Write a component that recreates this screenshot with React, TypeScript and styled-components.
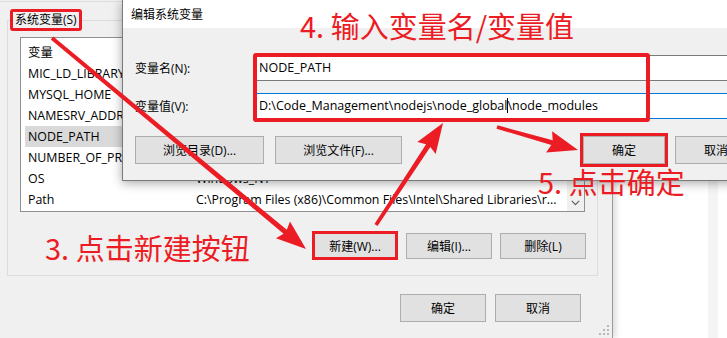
import React from 'react'
import styled, { createGlobalStyle } from 'styled-components'

const RED = '#ec1c24'
const UI_FONT = `"Open Sans", "Noto Sans CJK SC", sans-serif`
const NOTE_FONT = `"Noto Sans CJK SC", "Noto Sans", sans-serif`

const GlobalStyle = createGlobalStyle`
  html, body {
    margin: 0;
    padding: 0;
  }
  body {
    width: 727px;
    height: 338px;
    overflow: hidden;
    background: #ffffff;
    font-family: ${UI_FONT};
    font-size: 12px;
    color: #000000;
  }
`

const Desktop = styled.div`
  position: relative;
  width: 727px;
  height: 338px;
  overflow: hidden;
  display: flex;
`

/* ---------- back window: 环境变量 ---------- */

const BackDialog = styled.div`
  position: relative;
  width: 612px;
  flex: none;
  background: #f0f0f0;
  border-right: 1px solid #9a9a9a;
  box-shadow: 3px 0 6px rgba(0, 0, 0, 0.14);
  display: flex;
  flex-direction: column;
  z-index: 1;
`

const TopEdge = styled.div`
  height: 1px;
  margin-top: 1px;
  background: #dcdcdc;
`

const GroupBox = styled.fieldset`
  box-sizing: border-box;
  width: 591px;
  height: 267px;
  margin: 7px 0 0 7px;
  padding: 0;
  border: 1px solid #dcdcdc;
  display: flex;
  flex-direction: column;
  min-width: 0;
`

const GroupTitle = styled.legend`
  margin-left: 2px;
  padding: 0 2px;
  border: 3px solid ${RED};
  border-radius: 3px;
  line-height: 16px;
  font-size: 12px;
`

const ListBox = styled.div`
  box-sizing: border-box;
  width: 565px;
  height: 175px;
  margin: 6px 0 0 12px;
  border: 1px solid #8f8f8f;
  background: #ffffff;
  display: flex;
  overflow: hidden;
`

const ListRows = styled.div`
  flex: 1;
  padding-top: 3px;
  display: flex;
  flex-direction: column;
  min-width: 0;
`

const ListRow = styled.div<{ $selected?: boolean; $header?: boolean }>`
  display: grid;
  grid-template-columns: 168px 1fr;
  height: ${(p) => (p.$header ? 22 : 21)}px;
  align-items: center;
  margin-left: 4px;
  padding-left: 3px;
  background: ${(p) => (p.$selected ? '#d9d9d9' : 'transparent')};
  font-size: 12.4px;
  white-space: nowrap;
`

const Cell = styled.span`
  overflow: hidden;
  padding-right: 4px;
`

const ScrollBar = styled.div`
  width: 17px;
  flex: none;
  background: #f0f0f0;
  display: flex;
  flex-direction: column;
  justify-content: flex-end;
`

const ScrollArrow = styled.div`
  height: 17px;
  display: flex;
  align-items: center;
  justify-content: center;
`

const ButtonRow = styled.div<{ $top: number; $right: number; $gap: number }>`
  display: flex;
  justify-content: flex-end;
  align-items: center;
  gap: ${(p) => p.$gap}px;
  margin-top: ${(p) => p.$top}px;
  padding-right: ${(p) => p.$right}px;
`

const WinButton = styled.button<{ $w: number; $h: number; $mark?: number }>`
  box-sizing: border-box;
  width: ${(p) => p.$w}px;
  height: ${(p) => p.$h}px;
  flex: none;
  padding: 0;
  background: #e1e1e1;
  border: 1px solid #adadad;
  border-radius: 0;
  font-family: ${UI_FONT};
  font-size: 12px;
  color: #000000;
  outline: ${(p) => (p.$mark !== undefined ? `3px solid ${RED}` : 'none')};
  outline-offset: ${(p) => p.$mark ?? 0}px;
`

const Grip = styled.svg`
  position: absolute;
  right: 2px;
  bottom: 2px;
`

/* ---------- right side of the desktop ---------- */

const RightPane = styled.div`
  flex: 1;
  background: #ffffff;
  display: flex;
  justify-content: flex-end;
  padding-right: 9px;
`

const Stripe = styled.div`
  width: 10px;
  background: #f4f4f4;
`

/* ---------- front window: 编辑系统变量 ---------- */

const EditDialog = styled.div`
  position: absolute;
  left: 122px;
  top: 0;
  width: 650px;
  height: 181px;
  box-sizing: border-box;
  background: #f0f0f0;
  border: 1px solid #7a7a7a;
  border-top: none;
  box-shadow: 0 2px 10px rgba(0, 0, 0, 0.35);
  display: flex;
  flex-direction: column;
  z-index: 2;
`

const TitleBar = styled.div`
  height: 28px;
  flex: none;
  background: #ffffff;
  display: flex;
  align-items: center;
  padding-left: 8px;
`

const DialogBody = styled.div`
  padding: 27px 14px 0 12px;
  display: flex;
  flex-direction: column;
`

const FormGrid = styled.div`
  display: grid;
  grid-template-columns: 121px 1fr;
  row-gap: 12px;
  align-items: center;
`

const TextField = styled.div<{ $focused?: boolean }>`
  box-sizing: border-box;
  height: 26px;
  background: #ffffff;
  border: 1px solid ${(p) => (p.$focused ? '#0078d7' : '#7a7a7a')};
  padding-left: 2px;
  line-height: 24px;
  font-size: 12.5px;
  white-space: nowrap;
`

const Caret = styled.span`
  display: inline-block;
  width: 1px;
  height: 15px;
  background: #000000;
  vertical-align: -3px;
  margin-right: -1px;
`

const Spacer = styled.div`
  flex: 1;
`

/* ---------- red annotations ---------- */

const Note = styled.div<{ $x: number; $y: number }>`
  position: absolute;
  left: ${(p) => p.$x}px;
  top: ${(p) => p.$y}px;
  font-family: ${NOTE_FONT};
  font-size: 29px;
  line-height: 32px;
  color: ${RED};
  white-space: nowrap;
  z-index: 4;
`

const FieldMark = styled.div`
  position: absolute;
  left: 253px;
  top: 53px;
  width: 397px;
  height: 69px;
  box-sizing: border-box;
  border: 4px solid ${RED};
  border-radius: 3px;
  z-index: 3;
`

const ArrowLayer = styled.svg`
  position: absolute;
  left: 0;
  top: 0;
  z-index: 5;
  pointer-events: none;
`

const arrowPoints = (x1: number, y1: number, x2: number, y2: number) => {
  const len = Math.hypot(x2 - x1, y2 - y1)
  const ux = (x2 - x1) / len
  const uy = (y2 - y1) / len
  const nx = -uy
  const ny = ux
  const head = 27
  const wing = 11
  const shaft = 1.8
  const bx = x2 - ux * head
  const by = y2 - uy * head
  const wx = bx - ux * 3
  const wy = by - uy * 3
  const pts = [
    [x1 + nx * shaft, y1 + ny * shaft],
    [bx + nx * shaft * 1.4, by + ny * shaft * 1.4],
    [wx + nx * wing, wy + ny * wing],
    [x2, y2],
    [wx - nx * wing, wy - ny * wing],
    [bx - nx * shaft * 1.4, by - ny * shaft * 1.4],
    [x1 - nx * shaft, y1 - ny * shaft],
  ]
  return pts.map(([x, y]) => `${x.toFixed(1)},${y.toFixed(1)}`).join(' ')
}

const arrows = [
  [52, 38, 306, 249],
  [376, 225, 443, 123],
  [497, 127, 578, 150],
]

// values above the OS row lie under the edit window, so only the visible ones are filled
const rows = [
  ['MIC_LD_LIBRARY', ''],
  ['MYSQL_HOME', ''],
  ['NAMESRV_ADDR', ''],
  ['NODE_PATH', ''],
  ['NUMBER_OF_PR', ''],
  ['OS', 'Windows_NT'],
  ['Path', 'C:\\Program Files (x86)\\Common Files\\Intel\\Shared Libraries\\r...'],
]

const App = () => (
  <Desktop>
    <GlobalStyle />
    <BackDialog>
      <TopEdge />
      <GroupBox>
        <GroupTitle>系统变量(S)</GroupTitle>
        <ListBox>
          <ListRows>
            <ListRow $header>
              <Cell>变量</Cell>
              <Cell />
            </ListRow>
            {rows.map(([name, value]) => (
              <ListRow key={name} $selected={name === 'NODE_PATH'}>
                <Cell>{name}</Cell>
                <Cell>{value}</Cell>
              </ListRow>
            ))}
          </ListRows>
          <ScrollBar>
            <ScrollArrow>
              <svg width="9" height="6" viewBox="0 0 9 6">
                <path d="M0.8 0.8 L4.5 4.6 L8.2 0.8" fill="none" stroke="#606060" strokeWidth="1.2" />
              </svg>
            </ScrollArrow>
          </ScrollBar>
        </ListBox>
        <ButtonRow $top={19} $right={11} $gap={8}>
          <WinButton $w={86} $h={29} $mark={-3}>新建(W)...</WinButton>
          <WinButton $w={86} $h={26}>编辑(I)...</WinButton>
          <WinButton $w={86} $h={26}>删除(L)</WinButton>
        </ButtonRow>
      </GroupBox>
      <ButtonRow $top={18} $right={31} $gap={9}>
        <WinButton $w={86} $h={28}>确定</WinButton>
        <WinButton $w={86} $h={28}>取消</WinButton>
      </ButtonRow>
      <Grip width="11" height="11" viewBox="0 0 11 11">
        {[
          [8, 0],
          [4, 4],
          [8, 4],
          [0, 8],
          [4, 8],
          [8, 8],
        ].map(([x, y]) => (
          <rect key={`${x}-${y}`} x={x} y={y} width="2" height="2" fill="#b8b8b8" />
        ))}
      </Grip>
    </BackDialog>
    <RightPane>
      <Stripe />
    </RightPane>

    <EditDialog>
      <TitleBar>编辑系统变量</TitleBar>
      <DialogBody>
        <FormGrid>
          <span>变量名(N):</span>
          <TextField>NODE_PATH</TextField>
          <span>变量值(V):</span>
          <TextField $focused>
            D:\Code_Management\nodejs\node_global
            <Caret />
            \node_modules
          </TextField>
        </FormGrid>
        <ButtonRow $top={17} $right={0} $gap={11}>
          <WinButton $w={129} $h={28}>浏览目录(D)...</WinButton>
          <WinButton $w={127} $h={28}>浏览文件(F)...</WinButton>
          <Spacer />
          <WinButton $w={82} $h={28} $mark={0}>确定</WinButton>
          <WinButton $w={82} $h={28} style={{ marginLeft: -1 }}>取消</WinButton>
        </ButtonRow>
      </DialogBody>
    </EditDialog>

    <FieldMark />
    <Note $x={300} $y={9}>4. 输入变量名/变量值</Note>
    <Note $x={45} $y={231}>3. 点击新建按钮</Note>
    <Note $x={538} $y={165}>5. 点击确定</Note>

    <ArrowLayer width="727" height="338" viewBox="0 0 727 338">
      {arrows.map(([x1, y1, x2, y2]) => (
        <polygon key={`${x1}-${y1}`} points={arrowPoints(x1, y1, x2, y2)} fill={RED} />
      ))}
    </ArrowLayer>
  </Desktop>
)

export default App
